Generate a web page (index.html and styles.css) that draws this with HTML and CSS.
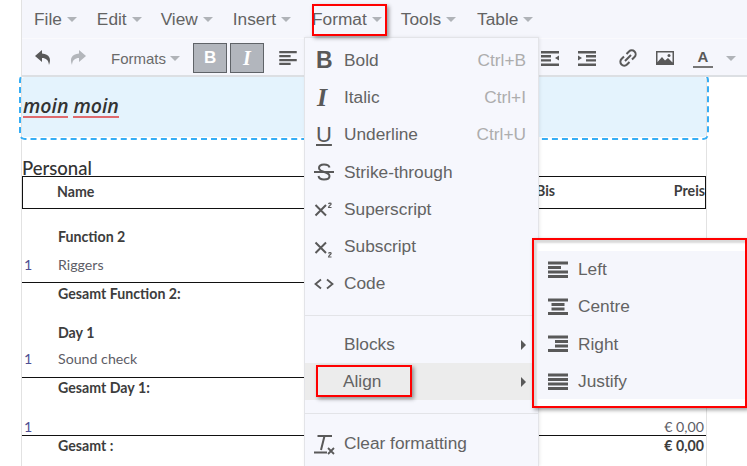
FILE: index.html
```html
<!DOCTYPE html>
<html lang="en">
<head>
<meta charset="utf-8">
<title>Editor</title>
<link rel="stylesheet" href="styles.css">
</head>
<body>
<svg class="defs" width="0" height="0" aria-hidden="true">
  <symbol id="i-left" viewBox="0 0 20 18"><path d="M0 .5h20v3H0zM0 5h13v3H0zM0 9.500h20v3H0zM0 14h20v3H0z"/></symbol>
  <symbol id="i-centre" viewBox="0 0 20 18"><path d="M0 .5h20v3H0zM3.500 5h13v3h-13zM3.500 9.500h13v3h-13zM0 14h20v3H0z"/></symbol>
  <symbol id="i-right" viewBox="0 0 20 18"><path d="M0 .5h20v3H0zM7 5h13v3H7zM7 9.500h13v3H7zM0 14h20v3H0z"/></symbol>
  <symbol id="i-justify" viewBox="0 0 20 18"><path d="M0 .5h20v3H0zM0 5h20v3H0zM0 9.500h20v3H0zM0 14h20v3H0z"/></symbol>
</svg>

<div class="editor">
  <nav class="menubar">
    <span class="mb">File<i class="caret"></i></span>
    <span class="mb">Edit<i class="caret"></i></span>
    <span class="mb">View<i class="caret"></i></span>
    <span class="mb">Insert<i class="caret"></i></span>
    <span class="mb mb-open">Format<i class="caret"></i></span>
    <span class="mb">Tools<i class="caret"></i></span>
    <span class="mb">Table<i class="caret"></i></span>
  </nav>

  <div class="toolbar">
    <svg class="tool undo" width="17" height="18" viewBox="0 0 17 18"><path d="M7 1 0 7l7 6V9c4 0 6.500 2 7 7 2.500-6 .5-11-7-11.500z"/></svg>
    <svg class="tool redo" width="17" height="18" viewBox="0 0 17 18"><path d="m10 1 7 6-7 6V9c-4 0-6.500 2-7 7-2.500-6-.5-11 7-11.500z"/></svg>
    <span class="formats">Formats<i class="caret caret-sm"></i></span>
    <span class="tbtn tbtn-b">B</span>
    <span class="tbtn tbtn-i">I</span>
    <svg class="tool t-left" width="18" height="14" viewBox="0 0 20 16"><path d="M0 0h20v2.600H0zM0 4.500h13v2.600H0zM0 9h20v2.600H0zM0 13.400h13V16H0z"/></svg>
    <svg class="tool t-out" width="18" height="15" viewBox="0 0 18 15"><path d="M0 0h18v2.400H0zM0 4h10v2.400H0zM0 8.200h10v2.400H0zM0 12.500h18V15H0zM18 4.500v5l-4-2.500z"/></svg>
    <svg class="tool t-in" width="18" height="15" viewBox="0 0 18 15"><path d="M0 0h18v2.400H0zM8 4h10v2.400H8zM8 8.200h10v2.400H8zM0 12.500h18V15H0zM0 4.500v5L4 7z"/></svg>
    <svg class="tool t-link" width="18" height="18" viewBox="0 0 18 18"><path class="ln" d="M7.500 5 10 2.500a3.200 3.200 0 0 1 5.500 5.500L13 10.500M10.500 13 8 15.500A3.200 3.200 0 0 1 2.500 10L5 7.500M6 12l6-6"/></svg>
    <svg class="tool t-img" width="18" height="16" viewBox="0 0 18 16"><path fill-rule="evenodd" d="M0 1h18v14H0zM1.500 2.500v9.500l4.500-5 3 3.500 3-2.500 4.500 4.500V2.500z"/><circle cx="13" cy="5.500" r="1.500"/></svg>
    <span class="fore">A</span>
    <i class="caret caret-fore"></i>
  </div>

  <div class="inline-block">
    <p class="moin"><span class="spell">moin</span> <span class="spell">moin</span></p>
  </div>

  <h2 class="section">Personal</h2>
  <div class="thead"><span class="c-name">Name</span><span class="c-bis">Bis</span><span class="c-preis">Preis</span></div>

  <div class="row row-group group-1"><b class="c-name">Function 2</b></div>
  <div class="row row-item"><span class="c-qty">1</span><span class="c-name">Riggers</span></div>
  <div class="row row-sum"><b class="c-name">Gesamt Function 2:</b></div>

  <div class="row row-group group-2"><b class="c-name">Day 1</b></div>
  <div class="row row-item"><span class="c-qty">1</span><span class="c-name">Sound check</span></div>
  <div class="row row-sum"><b class="c-name">Gesamt Day 1:</b></div>

  <div class="row row-last"><span class="c-qty">1</span><span class="c-price">€ 0,00</span></div>
  <div class="row row-total"><b class="c-name">Gesamt :</b><b class="c-price">€ 0,00</b></div>
</div>

<span class="mark mark-format"></span>

<div class="menu menu-format">
  <div class="mi"><span class="ico ico-b">B</span><span class="lbl">Bold</span><span class="key">Ctrl+B</span></div>
  <div class="mi"><span class="ico ico-i">I</span><span class="lbl">Italic</span><span class="key">Ctrl+I</span></div>
  <div class="mi"><span class="ico ico-u">U</span><span class="lbl">Underline</span><span class="key">Ctrl+U</span></div>
  <div class="mi"><span class="ico"><svg width="20" height="20" viewBox="0 0 20 20"><path class="ln" d="M15.500 5.500C15 3 12.500 2.500 10 2.500 7 2.500 5 4 5 6c0 5 10.500 3 10.500 8 0 2.500-2.500 3.500-5.500 3.500-3 0-5-1-5.500-3.500M0 10h20"/></svg></span><span class="lbl">Strike-through</span></div>
  <div class="mi"><span class="ico"><svg width="20" height="20" viewBox="0 0 20 20"><path class="ln" d="m1.500 6 10.500 10.500M12 6 1.500 16.500"/><path class="ln hair" d="M14.500 5c.3-1.200 2.700-1.200 2.700 0 0 1-2.700 1.800-2.700 3.500h3"/></svg></span><span class="lbl">Superscript</span></div>
  <div class="mi"><span class="ico"><svg class="over" width="20" height="20" viewBox="0 0 20 20"><path class="ln" d="m1.500 5.500 10.500 10.500M12 5.500 1.500 16"/><path class="ln hair" d="M14.500 16.500c.3-1.200 2.700-1.200 2.700 0 0 1-2.700 1.800-2.700 3.500h3"/></svg></span><span class="lbl">Subscript</span></div>
  <div class="mi"><span class="ico"><svg width="20" height="20" viewBox="0 0 20 20"><path class="ln thin" d="M7 5.500 1.500 10 7 14.500M13 5.500l5.500 4.500-5.500 4.500"/></svg></span><span class="lbl">Code</span></div>
  <div class="sep sep-1"></div>
  <div class="mi mi-sub"><span class="ico"></span><span class="lbl">Blocks</span><i class="arrow"></i></div>
  <div class="mi mi-sub mi-active"><span class="ico"></span><span class="lbl lbl-align">Align</span><i class="arrow"></i></div>
  <div class="sep sep-2"></div>
  <div class="mi"><span class="ico"><svg width="22" height="22" viewBox="0 0 22 22"><path class="ln" d="M3.500 3h14.500M10.500 3 7 17M0 19.500h13"/><path class="ln thin" d="m14 15 6 6M20 15l-6 6"/></svg></span><span class="lbl">Clear formatting</span></div>
</div>

<span class="mark mark-align"></span>

<div class="mark-sub">
  <div class="menu-sub">
    <div class="mi"><span class="ico"><svg width="20" height="18"><use href="#i-left"/></svg></span><span class="lbl">Left</span></div>
    <div class="mi"><span class="ico"><svg width="20" height="18"><use href="#i-centre"/></svg></span><span class="lbl">Centre</span></div>
    <div class="mi"><span class="ico"><svg width="20" height="18"><use href="#i-right"/></svg></span><span class="lbl">Right</span></div>
    <div class="mi"><span class="ico"><svg width="20" height="18"><use href="#i-justify"/></svg></span><span class="lbl">Justify</span></div>
  </div>
</div>
</body>
</html>
```

FILE: styles.css
```css
html, body { margin: 0; padding: 0; height: 466px; overflow: hidden; background: #fff; }
body { font-family: "Liberation Sans", Arial, sans-serif; color: #595959; position: relative; }
.defs { position: absolute; }
svg { fill: #595959; display: block; }
svg.over { overflow: visible; }
.ln { fill: none; stroke: #595959; stroke-width: 2; }
.ln.thin { stroke-width: 1.800; }
.ln.hair { stroke-width: 1.100; }

.editor { margin-left: 21px; width: 686px; height: 466px; box-sizing: border-box; border-left: 1px solid #e2e2e2; border-right: 1px solid #e2e2e2; }

.menubar { display: flex; height: 38px; margin-right: -41px; align-items: center; background: #f5f6fc; padding-left: 12px; font-size: 17.300px; color: #636363; border-bottom: 1px solid #fafafd; }
.mb { display: flex; align-items: center; margin-right: 20px; }
.mb:nth-child(2) { margin-right: 19px; }
.mb:nth-child(3) { margin-right: 20px; }
.mb:nth-child(4) { margin-right: 21px; }
.mb:nth-child(5) { margin-right: 19px; }
.mb:nth-child(6) { margin-right: 21px; }
.caret { display: block; flex: none; width: 0; height: 0; border: 5px solid transparent; border-top-color: #b0b3b8; border-bottom: 0; margin-left: 5px; margin-top: 1px; }
.caret-sm { margin-left: 4px; }

.toolbar { position: relative; z-index: 1; display: flex; align-items: center; height: 38px; margin-right: -41px; padding-top: 2px; background: #f5f6fc; border-bottom: 2px solid #dcdfe3; box-sizing: border-box; }
.tool { flex: none; }
.undo { margin-left: 13px; }
.redo { margin-left: 17px; fill: #b3b6bb; }
.formats { display: flex; flex: none; align-items: center; margin-left: 25px; font-size: 15px; color: #6a6a6a; }
.tbtn { flex: none; width: 32px; height: 28px; margin-left: 3px; background: #b2b6bd; border: 1px solid #5f6368; color: #fff; display: flex; align-items: center; justify-content: center; box-sizing: content-box; }
.tbtn-b { margin-left: 13px; font: bold 17px "Liberation Sans", sans-serif; }
.tbtn-i { font: italic bold 20px "Liberation Serif", serif; }
.t-left { margin-left: 15px; }
.t-out { margin-left: 244px; }
.t-in { margin-left: 19px; }
.t-link { margin-left: 23px; }
.t-img { margin-left: 19px; }
.fore { flex: none; margin-left: 19px; width: 20px; text-align: center; font-weight: bold; font-size: 15px; line-height: 18px; border-bottom: 2px solid #767676; color: #595959; }
.caret-fore { margin-left: 13px; }

.inline-block { height: 60px; box-sizing: border-box; outline: 2px dashed #35aef5; outline-offset: 1px; border-radius: 3px; background: #e4f3fd; display: flex; align-items: center; }
.moin { margin: 0 0 4px 1px; font: italic 600 19.500px "Open Sans", sans-serif; color: #333; }
.spell { border-bottom: 2px solid #df6a6e; line-height: 21px; display: inline-block; }

.section { margin: 21px 0 0; font: 500 18.500px/20px Lato, sans-serif; color: #333; height: 18px; }
.thead { position: relative; display: flex; align-items: center; height: 33px; padding-bottom: 2px; box-sizing: border-box; border: 1px solid #111; font: bold 14.200px Lato, sans-serif; color: #3d3d3d; }
.thead .c-name { margin-left: 34px; }
.c-bis { position: absolute; left: 513px; top: 5px; }
.c-preis { position: absolute; right: 0; top: 5px; }

.row { position: relative; display: flex; align-items: center; font: 14.200px Lato, sans-serif; color: #5d5d66; box-sizing: border-box; }
.row b { color: #3d3d3d; }
.row .c-name { position: absolute; left: 36px; }
.c-qty { margin-left: 2px; color: #4e4f92; }
.c-price { position: absolute; right: 2px; }
.row-group { height: 18px; }
.group-1 { margin-top: 18px; }
.row-item { height: 37px; border-bottom: 1px solid #111; }
.group-1 + .row-item { height: 38px; padding-top: 1px; }
.group-2 { margin-top: 19px; }
.group-2 + .row-item { padding-bottom: 2px; }
.group-2 ~ .row-sum { padding-bottom: 2px; }
.row-sum { height: 21px; }
.row-last { height: 29px; margin-top: 8px; border-bottom: 1px solid #111; padding-top: 10px; }
.row-total { height: 18px; }

.mark { position: absolute; box-sizing: border-box; border: 2px solid #f00; box-shadow: 2px 2px 4px rgba(0,0,0,.4); z-index: 3; }
.mark-format { left: 312px; top: 4px; width: 75px; height: 32px; }
.mark-align { left: 316px; top: 365px; width: 96px; height: 32px; }

.menu { position: absolute; left: 304px; top: 37px; width: 235px; height: 429px; background: #f6f7fd; border: 1px solid #e3e4e8; border-bottom: 0; box-sizing: border-box; padding-top: 4px; font-size: 17.300px; color: #636363; z-index: 2; box-shadow: 1px 0 3px rgba(0,0,0,.08); }
.mi { position: relative; display: flex; align-items: center; height: 37.200px; }
.mi-sub { height: 37px; }
.ico { flex: none; width: 30px; margin-left: 9px; height: 24px; display: flex; align-items: center; color: #595959; }
.ico-b { font: bold 23px "Liberation Sans", sans-serif; padding-left: 2px; width: 28px; }
.ico-i { font: italic bold 26px "Liberation Serif", serif; padding-left: 3px; width: 27px; }
.ico-u { font: 22px "Liberation Sans", sans-serif; padding-left: 2px; width: 28px; text-decoration: underline; text-decoration-thickness: 2px; text-underline-offset: 2px; }
.lbl { flex: none; }
.key { position: absolute; right: 12px; color: #adadad; }
.sep { height: 1px; background: #e3e4e8; }
.sep-1 { margin-top: 13px; margin-bottom: 10px; }
.sep-2 { margin-top: 13px; margin-bottom: 11px; }
.mi-active { background: #ececec; }
.lbl-align { margin-left: -1px; }
.arrow { position: absolute; right: 12px; width: 0; height: 0; border: 5px solid transparent; border-left-color: #595959; border-right: 0; }

.mark-sub { position: absolute; left: 532px; top: 238px; width: 215px; height: 170px; box-sizing: border-box; padding: 11px 0 0 4px; border: 2px solid #f00; box-shadow: 2px 2px 4px rgba(0,0,0,.4), inset 3px 3px 2px rgba(0,0,0,.15); background: #fff; z-index: 3; font-size: 17.300px; color: #636363; }
.menu-sub { background: #f5f6fc; height: 148px; }
.menu-sub .mi { height: 37.300px; }
.menu-sub .ico { margin-left: 10px; width: 30px; }
```
